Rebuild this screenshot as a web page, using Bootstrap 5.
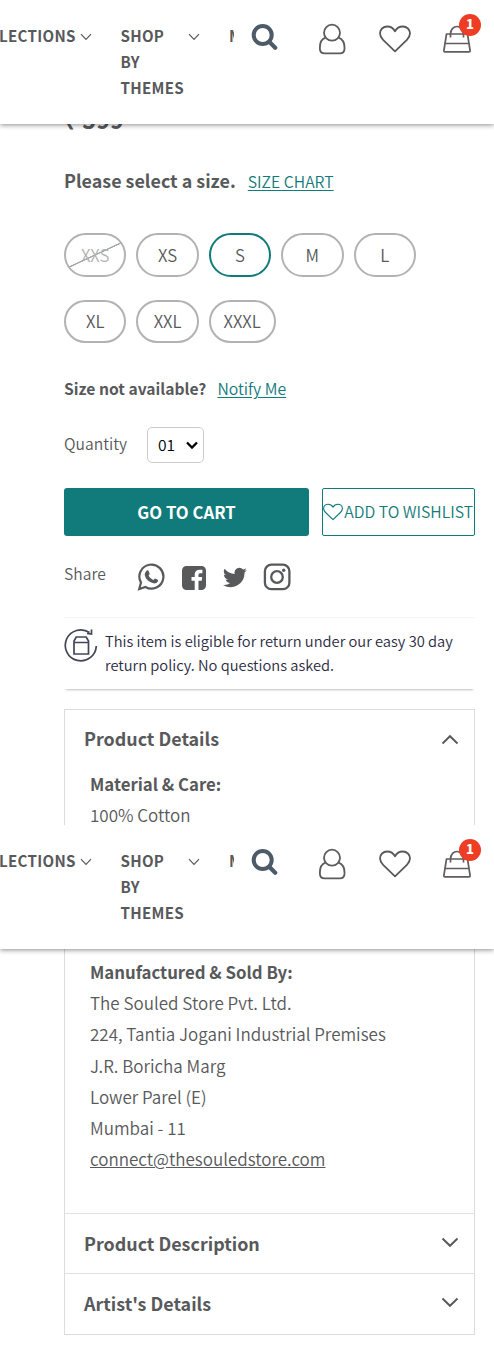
<!DOCTYPE html>
<html lang="en">
<head>
<meta charset="utf-8">
<meta name="viewport" content="width=device-width, initial-scale=1">
<title>The Souled Store</title>
<link href="https://cdn.jsdelivr.net/npm/bootstrap@5.3.0/dist/css/bootstrap.min.css" rel="stylesheet">
<style>
:root{--teal:#117a7a;--ink:#58595b}
body{font-family:"Noto Sans CJK SC","Open Sans",sans-serif;font-weight:350;color:var(--ink);background:#fff;font-size:15.65px;overflow-x:hidden}
b{font-weight:700}
svg{display:block;flex:none}
.screen{overflow:hidden}
.screen-one{height:825px}
.screen-two{height:528px}
.site-bar{height:124px;background:#fff;box-shadow:0 1px 5px rgba(0,0,0,.45);z-index:3}
.menu-strip{width:234px;padding-top:22px;font-size:15.1px;line-height:26px;font-weight:700;letter-spacing:.3px}
.menu-strip svg{margin-top:11px}
.m-one{width:121.5px;margin-left:-1px}
.m-two{width:67.5px}
.tools{padding:22px 0 0 17px}
.count-dot{top:-10px;left:17px;width:22px;height:22px;background:#ee3d24;font-size:13px;line-height:20px;font-weight:900}
.column-main{margin-left:64px;width:411px}
.price{font-size:23.5px;line-height:40px;margin-top:-25px}
.pick{line-height:32px;margin-top:25px;font-size:17.9px}
.chart-link{font-size:15.75px;margin-top:2px;margin-bottom:-2px}
.teal-link{color:var(--teal);text-underline-offset:2px}
.sizes{gap:23px 10px;margin-top:37px}
.pill{height:43.5px;min-width:62.4px;padding:0 12.7px;border:2px solid #b2b2b2;border-radius:22px;background:#fff;line-height:38px;font-size:16.8px;font-weight:350;color:var(--ink)}
.pill.on{border-color:var(--teal)}
.pill.gone{color:#b2b2b2;background:linear-gradient(155deg,transparent calc(50% - 1px),#a5a5a5 calc(50% - .4px),#a5a5a5 calc(50% + .4px),transparent calc(50% + 1px))}
.missing{line-height:30px;margin-top:31px}
.notify{font-size:15.8px}
.qty{height:36px;margin-top:23px}
.qty-label{margin-top:-3px;width:64px}
.qty-box{width:57px;height:36px;border:1px solid #ccc;border-radius:5px;color:#000;padding:0 4px 0 10px;margin-left:19px}
.actions{margin-top:25px;gap:13px}
.cart{width:245px;height:48px;border-radius:3px;background:var(--teal);color:#fff;font-weight:700;font-size:16.7px;border:0;padding-top:3px}
.wish{width:153px;height:48px;border:1px solid var(--teal);border-radius:2px;color:var(--teal);background:#fff;padding:0 1px 0 0;font-size:15.75px;font-weight:350;white-space:nowrap}
.share{margin-top:27px;height:30px}
.share-label{width:73px;margin-top:-1px}
.returns{margin-top:24px;height:72px;border-top:1px solid #f6f6f6;box-shadow:0 3px 2px -2px rgba(0,0,0,.25);color:#2b2b3f;font-size:14.7px;line-height:24px}
.panel{border:1px solid #dcdcdc}
.panel-head{padding:0 15px 0 19px;font-weight:700;font-size:17.9px;height:60px}
.facts{padding-left:25px;line-height:31.2px;font-size:17px}
.facts b{display:block;font-size:16.8px;margin-bottom:-1px}
</style>
</head>
<body>
<svg width="0" height="0" class="position-absolute" aria-hidden="true">
<defs>
<symbol id="down" viewBox="0 0 12 8"><path d="M1 1.2 6 6.4 11 1.2" fill="none" stroke="currentColor" stroke-width="1.2"/></symbol>
<symbol id="big-down" viewBox="0 0 18 11"><path d="M1.5 1.5 9 8.8 16.500 1.500" fill="none" stroke="currentColor" stroke-width="1.9"/></symbol>
<symbol id="search" viewBox="0 0 28 28"><circle cx="11.700" cy="13" r="9" fill="none" stroke="#4d5b68" stroke-width="4"/><path d="m18.500 20 5.700 5.700" stroke="#4d5b68" stroke-width="4.200" stroke-linecap="round"/></symbol>
<symbol id="user" viewBox="0 0 28 32"><g fill="none" stroke="#5c5c5e" stroke-width="1.800"><circle cx="14" cy="9.700" r="8"/><path d="M7.500 14.700C3.800 16 1.900 19.300 1.900 24.500v1.200c0 3 1.800 4.600 4.800 4.600h15c3 0 4.800-1.600 4.800-4.600v-1.200c0-5.200-2.300-8.500-6-9.800"/></g></symbol>
<symbol id="heart" viewBox="0 0 32 28"><path d="M16 26.300 4.100 14.800C1.700 12.400 1 10.300 1 8.300 1 4.500 4.100 1.500 8.200 1.500c3.700 0 6.100 1.600 7.800 4.700 1.700-3.100 4.100-4.700 7.800-4.700C27.900 1.500 31 4.500 31 8.300c0 2-.7 4.100-3.100 6.500Z" fill="none" stroke="currentColor" stroke-width="1.800" stroke-linejoin="round"/></symbol>
<symbol id="bag" viewBox="0 0 30 30"><g fill="none" stroke="#625c5f" stroke-width="1.700" stroke-linejoin="round"><path d="M4.500 10h21l2.600 16.500c.1.900-.3 1.300-1 1.300h-24.200c-.7 0-1.100-.4-1-1.300ZM3.500 19.500h23M8.500 13.500V10C8.500 5.500 11.500 2.500 15 2.500s6.500 3 6.500 7.500v3.500"/></g></symbol>
</defs>
</svg>

<section class="screen screen-one">
<header class="site-bar position-relative d-flex align-items-start">
<nav class="menu-strip d-flex overflow-hidden flex-shrink-0">
<div class="m-one d-flex flex-shrink-0"><span>LECTIONS</span><svg class="ms-1" width="12" height="8"><use href="#down"/></svg></div>
<div class="m-two flex-shrink-0">SHOP<br>BY<br>THEMES</div>
<svg width="12" height="8"><use href="#down"/></svg>
<span style="margin-left:29px">M</span>
</nav>
<div class="tools d-flex align-items-start">
<svg width="28" height="28"><use href="#search"/></svg>
<svg width="28" height="32" style="margin:1px 0 0 39px"><use href="#user"/></svg>
<svg width="32" height="28" style="margin:3px 0 0 33px"><use href="#heart"/></svg>
<div class="position-relative" style="margin:2px 0 0 31px"><svg width="30" height="30"><use href="#bag"/></svg><span class="count-dot position-absolute rounded-circle text-white text-center">1</span></div>
</div>
</header>
<main class="column-main">
<div class="price fw-bold">₹ 599</div>
<div class="pick d-flex"><b>Please select a size.</b><a class="teal-link chart-link ms-2 ps-1" href="#">SIZE CHART</a></div>
<div class="sizes d-flex flex-wrap">
<button class="pill gone">XXS</button><button class="pill">XS</button><button class="pill on">S</button><button class="pill">M</button><button class="pill">L</button><button class="pill">XL</button><button class="pill">XXL</button><button class="pill">XXXL</button>
</div>
<div class="missing"><b>Size not available?</b><a class="teal-link notify ms-2" style="padding-left:3px" href="#">Notify Me</a></div>
<div class="qty d-flex align-items-center"><span class="qty-label">Quantity</span><div class="qty-box d-flex align-items-center justify-content-between"><span>01</span><svg width="14" height="10" viewBox="0 0 14 10"><path d="M2 2.500 7 7.500 12 2.500" fill="none" stroke="#000" stroke-width="2.300"/></svg></div></div>
<div class="actions d-flex"><button class="cart">GO TO CART</button><button class="wish d-flex align-items-center justify-content-between"><svg width="20" height="18"><use href="#heart"/></svg><span>ADD TO WISHLIST</span></button></div>
<div class="share d-flex"><span class="share-label">Share</span>
<svg width="28" height="28" viewBox="0 0 28 28"><path d="M2.200 26 4 19.600A12 12 0 1 1 8.400 24Z" fill="none" stroke="#58595b" stroke-width="2.200"/><path d="M9.700 7.700c.8-.7 1.500-.5 1.900.3l1 2.400c.3.800-.9 1.700-1 2.200.9 2 2.500 3.500 4.600 4.300.6 0 1.200-1.500 1.900-1.500l2.600 1.300c.6.300.4 1.100.1 1.800-.7 1.500-2.700 2.100-4.200 1.800-4.700-1-8-4.300-8.800-8-.3-1.700.4-3.300 1.900-4.600Z" fill="#58595b"/></svg>
<svg width="24" height="24" viewBox="0 0 24 24" style="margin:3px 0 0 17px"><path d="M4.500 0h15A4.500 4.500 0 0 1 24 4.500v15a4.500 4.500 0 0 1-4.500 4.500H16.500v-9.200h3.200l.5-3.700h-3.700V9c0-1.100.4-1.800 1.900-1.800h2V3.800c-5.200-.7-7.700 1-7.700 4.700v2.600H9.500v3.700h3.200V24H4.500A4.500 4.500 0 0 1 0 19.500v-15A4.500 4.500 0 0 1 4.500 0Z" fill="#58595b"/></svg>
<svg width="24" height="21" viewBox="0 2 24 20" style="margin:4px 0 0 16.500px"><path d="M23.900 4.600a10 10 0 0 1-2.800.8 5 5 0 0 0 2.100-2.700 10 10 0 0 1-3.100 1.200 4.900 4.900 0 0 0-8.400 4.500A14 14 0 0 1 1.600 3.200a4.900 4.900 0 0 0 1.500 6.500 4.900 4.900 0 0 1-2.200-.6c0 2.400 1.700 4.400 3.900 4.900a5 5 0 0 1-2.200.1 4.900 4.900 0 0 0 4.600 3.400A9.900 9.900 0 0 1 0 19.500a14 14 0 0 0 21.500-12.400 10 10 0 0 0 2.400-2.500Z" fill="#58595b"/></svg>
<svg width="28" height="28" viewBox="0 0 28 28" style="margin-left:16.500px"><g fill="none" stroke="#58595b" stroke-width="2.300"><rect x="1.900" y="1.700" width="24.500" height="24.500" rx="6.500"/><circle cx="14" cy="14" r="5.800"/></g><circle cx="20.700" cy="7.200" r="1.700" fill="#58595b"/></svg>
</div>
<div class="returns d-flex"><svg width="34" height="36" viewBox="0 0 34 36" style="margin:10px 7px 0 0"><g fill="none" stroke="#45455a" stroke-width="1.700"><path d="M25.500 4.500A15.500 15.500 0 1 0 32.300 18M23 5.500l4.500.5V1.500"/><path d="M10 14.500h14.500V26H10ZM10 14.500V13l2.200-4h10l2.300 4v1.500"/></g></svg><div style="padding-top:11px">This item is eligible for return under our easy 30 day<br>return policy. No questions asked.</div></div>
<div class="panel" style="margin-top:20px"><div class="panel-head d-flex align-items-center justify-content-between" style="height:59px"><span style="margin-top:-2px">Product Details</span><svg width="18" height="11" style="transform:rotate(180deg)"><use href="#big-down"/></svg></div>
<div class="facts"><b>Material &amp; Care:</b>100% Cotton</div><div style="height:60px"></div></div>
</main>
</section>

<section class="screen screen-two">
<header class="site-bar position-relative d-flex align-items-start">
<nav class="menu-strip d-flex overflow-hidden flex-shrink-0">
<div class="m-one d-flex flex-shrink-0"><span>LECTIONS</span><svg class="ms-1" width="12" height="8"><use href="#down"/></svg></div>
<div class="m-two flex-shrink-0">SHOP<br>BY<br>THEMES</div>
<svg width="12" height="8"><use href="#down"/></svg>
<span style="margin-left:29px">M</span>
</nav>
<div class="tools d-flex align-items-start">
<svg width="28" height="28"><use href="#search"/></svg>
<svg width="28" height="32" style="margin:1px 0 0 39px"><use href="#user"/></svg>
<svg width="32" height="28" style="margin:3px 0 0 33px"><use href="#heart"/></svg>
<div class="position-relative" style="margin:2px 0 0 31px"><svg width="30" height="30"><use href="#bag"/></svg><span class="count-dot position-absolute rounded-circle text-white text-center">1</span></div>
</div>
</header>
<div class="column-main">
<div class="panel border-top-0">
<div class="facts" style="height:264px;padding-top:8px"><b>Manufactured &amp; Sold By:</b>The Souled Store Pvt. Ltd.<br>224, Tantia Jogani Industrial Premises<br>J.R. Boricha Marg<br>Lower Parel (E)<br>Mumbai - 11<br><a href="#" class="text-reset">connect@thesouledstore.com</a></div>
<div class="panel-head border-top d-flex align-items-center justify-content-between"><span>Product Description</span><svg width="18" height="11" style="margin-top:-2px"><use href="#big-down"/></svg></div>
<div class="panel-head border-top d-flex align-items-center justify-content-between" style="height:61px;padding-bottom:1px"><span>Artist's Details</span><svg width="18" height="11" style="margin-top:-2px"><use href="#big-down"/></svg></div>
</div>
</div>
</section>
<script src="https://cdn.jsdelivr.net/npm/bootstrap@5.3.0/dist/js/bootstrap.bundle.min.js"></script>
</body>
</html>
